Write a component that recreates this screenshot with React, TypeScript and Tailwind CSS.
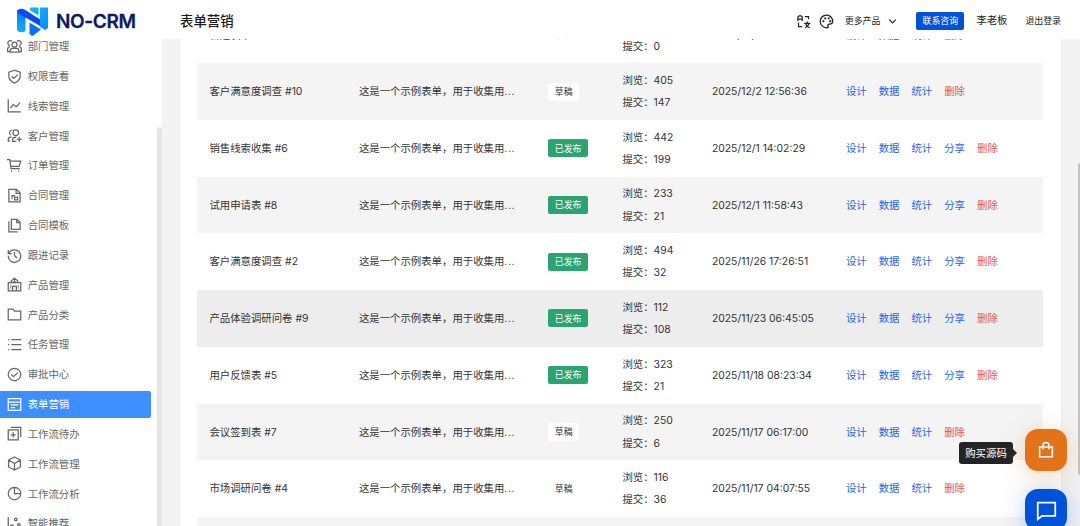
import React from 'react';

const Icon: React.FC<{ children: React.ReactNode; className?: string }> = ({ children, className = 'size-[15px]' }) => (
  <svg viewBox="0 0 24 24" fill="none" stroke="currentColor" strokeWidth={2} className={`shrink-0 ${className}`}>
    {children}
  </svg>
);

interface MenuItem {
  label: string;
  icon: React.ReactNode;
  active?: boolean;
}

const MENU: MenuItem[] = [
  {
    label: '部门管理',
    icon: <><circle cx="12" cy="9" r="4" /><path d="M5 21v-2a4 4 0 0 1 4-4h6a4 4 0 0 1 4 4v2zM8 3.500A4 4 0 1 0 5 10.500M16 3.500A4 4 0 1 1 19 10.500M4.500 12.500A4 4 0 0 0 1 16.500V20h4M19.500 12.500a4 4 0 0 1 3.500 4V20h-4" /></>,
  },
  {
    label: '权限查看',
    icon: <path d="M12 2 3 5v7c0 4.600 3 7.700 9 10.500 6-2.800 9-5.900 9-10.500V5zM7.500 11.500l3.500 3.500 6-6" />,
  },
  { label: '线索管理', icon: <path d="M2 2v20h20M5.500 16l4.500-5.500 5 3.500 6-6.500" /> },
  {
    label: '客户管理',
    icon: <><circle cx="14" cy="7.500" r="4.500" /><path d="M8 3.200a4.500 4.500 0 0 0-1.500 8.500M7.500 14.500H6a4 4 0 0 0-4 4V21h3M15 15h-2a4 4 0 0 0-4 4v2.500h6M19.500 14v8M15.500 18h8" /></>,
  },
  {
    label: '订单管理',
    icon: <><path d="M0 2.500h4.500L6.500 17h14M5 5h17l-2.500 8.500H6.200" /><path d="M6.500 21h1.500M18 21h1.500" strokeWidth={3} /></>,
  },
  {
    label: '合同管理',
    icon: <><path d="M3 2h12l6 6v14H3zM14.500 2v6.500H21" /><path d="M8 17v-5h5M12 14.500h5V19h-5z" /></>,
  },
  { label: '合同模板', icon: <path d="M7 2h9l5 5v11H7zM15.500 2v5.500H21M3 5v17h14" /> },
  { label: '跟进记录', icon: <path d="M2 3v6h6M2.800 9A10 10 0 1 1 2 12.500M12 6.500V12l4 4" /> },
  {
    label: '产品管理',
    icon: <><path d="M2 9h20v13H2zM9 22v-7h6v7M7 9V6l5-4 5 4v3" /><path d="M12 5v4M9.500 7h5M6 13v6M18 13v6" strokeWidth={1.3} /></>,
  },
  { label: '产品分类', icon: <path d="M2 3.500h7.500l2.500 3h10v14H2z" /> },
  { label: '任务管理', icon: <path d="M7 4h16M7 12h16M7 20h16M1.500 4h2M1.500 12h2M1.500 20h2" /> },
  { label: '审批中心', icon: <><circle cx="12" cy="12" r="10" /><path d="m7 12 3.500 3.500L17 9" /></> },
  { label: '表单营销', active: true, icon: <path d="M2 2.500h20v19H2zM2 8h20M6 12.500h12M6 17h7" /> },
  { label: '工作流待办', icon: <path d="M2 6h16v16H2zM6 2h16v16M10 10v8M6 14h8" /> },
  { label: '工作流管理', icon: <path d="m12 1.500 9.500 5v11l-9.500 5-9.500-5v-11zM2.500 6.500l9.500 5.500 9.500-5.500M12 12v10" /> },
  { label: '工作流分析', icon: <><circle cx="12" cy="12" r="10" /><path d="M12 2v10h10" /></> },
  {
    label: '智能推荐',
    icon: <><path d="M2 2v20h20" /><circle cx="8" cy="16" r="2" /><circle cx="14" cy="5.500" r="2" /><circle cx="19" cy="14" r="2" /></>,
  },
];

interface FormRow {
  name: string;
  description?: string;
  published: boolean;
  views: number;
  submits: number;
  time: string;
  hover?: boolean;
}

const SAMPLE = '这是一个示例表单，用于收集用';

const FORMS: FormRow[] = [
  { name: '新建表单', published: false, views: 0, submits: 0, time: '2025/12/3 10:35:17' },
  { name: '客户满意度调查 #10', description: SAMPLE, published: false, views: 405, submits: 147, time: '2025/12/2 12:56:36' },
  { name: '销售线索收集 #6', description: SAMPLE, published: true, views: 442, submits: 199, time: '2025/12/1 14:02:29' },
  { name: '试用申请表 #8', description: SAMPLE, published: true, views: 233, submits: 21, time: '2025/12/1 11:58:43' },
  { name: '客户满意度调查 #2', description: SAMPLE, published: true, views: 494, submits: 32, time: '2025/11/26 17:26:51' },
  { name: '产品体验调研问卷 #9', description: SAMPLE, published: true, views: 112, submits: 108, time: '2025/11/23 06:45:05', hover: true },
  { name: '用户反馈表 #5', description: SAMPLE, published: true, views: 323, submits: 21, time: '2025/11/18 08:23:34' },
  { name: '会议签到表 #7', description: SAMPLE, published: false, views: 250, submits: 6, time: '2025/11/17 06:17:00' },
  { name: '市场调研问卷 #4', description: SAMPLE, published: false, views: 116, submits: 36, time: '2025/11/17 04:07:55' },
];

const Logo: React.FC = () => (
  <div className="flex items-center">
    <svg viewBox="0 0 31 29" className="h-[29px] w-[31px]">
      <defs>
        <linearGradient id="sky" x1="0" y1="0" x2="1" y2="1">
          <stop offset="0" stopColor="#12b5fb" />
          <stop offset="1" stopColor="#0a8bff" />
        </linearGradient>
        <linearGradient id="stem" x1="0" y1="0" x2="0" y2="1">
          <stop offset="0" stopColor="#0878ff" />
          <stop offset="1" stopColor="#0bb0fc" />
        </linearGradient>
      </defs>
      <path d="M0 3.500 3.500 2 8.500 5.500V24l-1.500 1H2L0 23z" fill="url(#stem)" />
      <path d="M0 3.500Q3.500.500 7.500 2.500L24 13v6.500L1.500 6.500z" fill="#0b49f5" />
      <path d="M13 .500h8.500V8.500L13 3.200zM23 .500h8V21l-3 2-5-3.300z" fill="url(#sky)" />
      <path d="m12.500 15.500 11.500 7-8 6.200h-1.500l-2-2z" fill="#0870ff" />
    </svg>
    <span className="ml-2 text-[19px] font-semibold leading-none tracking-[-0.35px] text-[#0b1c62] [-webkit-text-stroke:0.3px_#0b1c62]">NO-CRM</span>
  </div>
);

const Header: React.FC = () => (
  <header className="relative z-10 flex h-[39px] shrink-0 items-center bg-white pb-px text-[8.9px] text-[#222]">
    <div className="w-[180px] pl-[17px] pt-[5px]"><Logo /></div>
    <h1 className="pt-[5px] text-[13.4px] font-medium text-[#1a1a1a]">表单营销</h1>
    <div className="ml-auto flex items-center pr-[19px] pt-[4px]">
      <Icon className="mr-[8px] size-[15px]">
        <path d="M3 11V5l2-2h3l2 2v6M3 8h7M14 4h6v4M4 14v6h6M13 15h10M18 12v3M14.500 22q5-2 6.500-7M15.500 16q1.500 4.500 6.500 6" />
      </Icon>
      <Icon className="mr-[11px] size-[15px]">
        <path d="M15 21c-2 2-7 1-10-2A10 10 0 1 1 22 12c0 3-2 4-5 4s-4 3-2 5z" />
        <path d="M5.500 11.500h3M8.500 7h3M14 7h3M16.500 11.500h3" strokeWidth={3} />
      </Icon>
      <span>更多产品</span>
      <Icon className="ml-[7px] size-[11px]"><path d="m5 8 7 7 7-7" strokeWidth={2.8} /></Icon>
      <button className="ml-[18px] h-[18px] w-[48px] rounded-[2px] bg-[#0052d9] text-white">联系咨询</button>
      <span className="ml-[12px] text-[10.4px]">李老板</span>
      <span className="ml-[18px]">退出登录</span>
    </div>
  </header>
);

const Sidebar: React.FC = () => (
  <aside className="flex w-[162px] shrink-0 justify-between overflow-hidden bg-white">
    <nav className="-mt-[6.3px] flex w-[151.300px] flex-col gap-[2.83px]">
      {MENU.map(item => (
        <a
          key={item.label}
          className={`flex h-[27px] shrink-0 items-center gap-[6px] rounded-r-[2px] pl-[6.700px] text-[10.4px] ${item.active ? 'bg-[#3d8eff] text-white' : 'text-[#666]'}`}
        >
          <Icon>{item.icon}</Icon>
          <span className="pt-[1.400px]">{item.label}</span>
        </a>
      ))}
    </nav>
    <div className="mt-[88px] h-[500px] w-[5px] rounded-full bg-[#e5e5e5]" />
  </aside>
);

const TableRow: React.FC<{ form: FormRow; striped: boolean }> = ({ form, striped }) => {
  const actions = form.published ? ['设计', '数据', '统计', '分享'] : ['设计', '数据', '统计'];
  return (
    <div
      className={`grid h-[56.720px] shrink-0 grid-cols-[149.500px_189px_74.500px_89.500px_134px_1fr] items-center pl-[12px] pt-[1px] ${form.hover ? 'bg-[#ededed]' : striped ? 'bg-[#f4f4f4]' : 'bg-white'}`}
    >
      <span>{form.name}</span>
      <span>{form.description && <>{form.description}<span className="tracking-[0.6px]">...</span></>}</span>
      <span
        className={`-mt-px flex h-[18px] items-center justify-center rounded-[2px] text-[8.9px] ${form.published ? 'w-[40.500px] bg-[#2ba471] text-white' : 'w-[31.500px] bg-white'}`}
      >
        {form.published ? '已发布' : '草稿'}
      </span>
      <div className="pt-[0.500px] leading-[22.3px]">
        <p>浏览：{form.views}</p>
        <p>提交：{form.submits}</p>
      </div>
      <span>{form.time}</span>
      <div className="flex gap-[12px] text-[#2563eb]">
        {actions.map(action => <a key={action}>{action}</a>)}
        <a className="text-[#e25850]">删除</a>
      </div>
    </div>
  );
};

const App: React.FC = () => (
  <div className="relative flex h-[526px] w-[1080px] flex-col overflow-hidden bg-white font-['Inter','Noto_Sans_CJK_SC',sans-serif]">
    <Header />
    <div className="flex min-h-0 flex-1">
      <Sidebar />
      <main className="flex min-w-0 flex-1 justify-between overflow-hidden bg-[#f3f3f3] pl-[18px]">
        <div className="w-[881px] bg-white pl-[17.400px] pr-[18.500px] text-[10.4px] text-[#333] shadow-[0_0_3px_rgba(0,0,0,0.06)]">
          <div className="-mt-[32.500px] flex flex-col">
            {FORMS.map((form, i) => <TableRow key={form.name} form={form} striped={i % 2 === 1} />)}
            <div className="h-[57px] shrink-0 bg-[#f4f4f4]" />
          </div>
        </div>
        <div className="mt-[124px] h-[312px] w-[2px] rounded-l-full bg-[#c4c4c4]" />
      </main>
    </div>

    {/* floating buttons */}
    <div className="absolute left-[959px] top-[429px] flex items-center">
      <div className="mt-[6px] flex h-[22px] w-[54px] items-center justify-center rounded-[3px] bg-[#242424] pt-px text-[10.4px] text-white">购买源码</div>
      <div className="mt-[6px] border-y-[4px] border-l-[4px] border-y-transparent border-l-[#242424]" />
      <button className="ml-[8px] flex size-[42px] items-center justify-center rounded-[13px] bg-[#e37318] text-white shadow-[0_4px_24px_rgba(227,115,24,0.3)]">
        <Icon className="size-[18px]"><path d="M3.500 8h17v13h-17zM8 11V6a4 4 0 0 1 8 0v5" /></Icon>
      </button>
    </div>
    <button className="absolute left-[1025px] top-[489px] flex size-[42px] items-center justify-center rounded-[13px] bg-[#0052d9] text-white shadow-[0_4px_24px_rgba(0,82,217,0.3)]">
      <Icon className="size-[21px]"><path d="M2 3h20v15H7l-5 4z" /></Icon>
    </button>
  </div>
);

export default App;
